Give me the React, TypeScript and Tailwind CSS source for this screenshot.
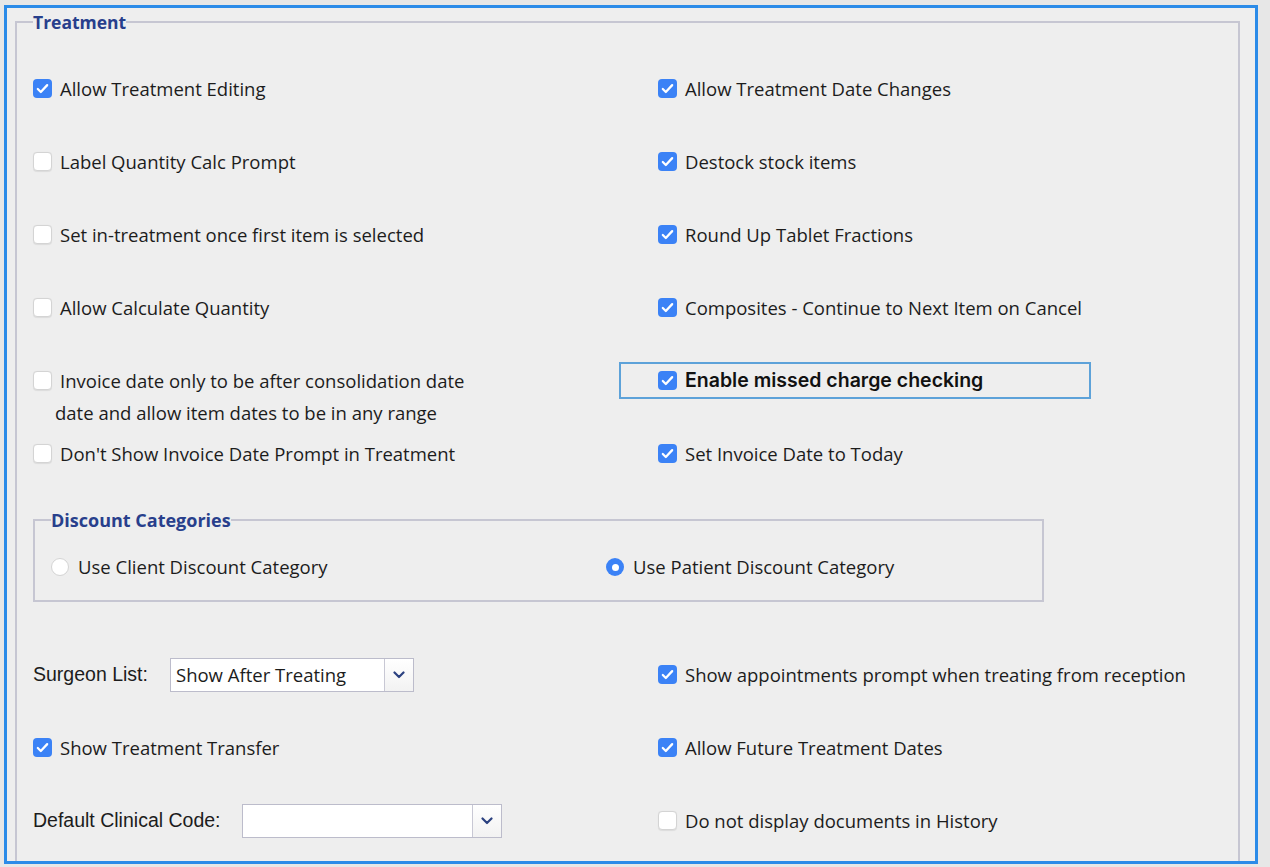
import { type ReactNode } from 'react'

const BODY = "font-['Open_Sans','Noto_Sans',sans-serif] text-[18.5px] text-[#1c1c1c]"

function Check({ checked }: { checked?: boolean }) {
  if (checked) {
    return (
      <span className="flex h-[19px] w-[19px] shrink-0 items-center justify-center rounded-[4px] bg-[#3b82f6]">
        <svg viewBox="0 0 16 16" className="h-[15px] w-[15px]" fill="none">
          <path d="M3 8.6l3.2 3.1L13 4.4" stroke="#fff" strokeWidth="2.4" strokeLinecap="round" strokeLinejoin="round" />
        </svg>
      </span>
    )
  }
  return (
    <span className="h-[19px] w-[19px] shrink-0 rounded-[4px] border border-[#d4d4d4] bg-white shadow-[0_0.5px_1px_rgba(0,0,0,0.08)]" />
  )
}

function Radio({ checked }: { checked?: boolean }) {
  if (checked) {
    return (
      <span className="flex h-[18px] w-[18px] shrink-0 items-center justify-center rounded-full bg-[#3b82f6]">
        <span className="h-[7px] w-[7px] rounded-full bg-white" />
      </span>
    )
  }
  return <span className="h-[18px] w-[18px] shrink-0 rounded-full border border-[#d4d4d4] bg-white" />
}

function CheckRow({ label, checked }: { label: string; checked?: boolean }) {
  return (
    <div className="flex items-center gap-[8px] leading-6">
      <Check checked={checked} />
      <span className="whitespace-nowrap">{label}</span>
    </div>
  )
}

function Select({ value, width }: { value?: string; width: string }) {
  return (
    <div className={`flex h-[34px] ${width} border border-[#bcbccb] bg-white`}>
      <div className="flex flex-1 items-center px-[5px] leading-6">{value}</div>
      <div className="flex w-[29px] items-center justify-center border-l border-[#c8c8d4] bg-gradient-to-b from-white to-[#f2f2f2]">
        <svg viewBox="0 0 12 8" className="h-[8px] w-[12px]" fill="none">
          <path d="M1.5 1.5L6 6l4.5-4.5" stroke="#2b4180" strokeWidth="2.2" strokeLinecap="round" strokeLinejoin="round" />
        </svg>
      </div>
    </div>
  )
}

function Row({ left, right, rightBox }: { left: ReactNode; right: ReactNode; rightBox?: boolean }) {
  return (
    <div className="grid h-[73px] grid-cols-[586px_1fr] items-center">
      <div>{left}</div>
      {rightBox ? (
        <div className="flex h-[37px] w-[472px] items-center border-2 border-[#5da2d9] pl-[37px]">{right}</div>
      ) : (
        <div className="pl-[39px]">{right}</div>
      )}
    </div>
  )
}

export default function App() {
  return (
    <div className={`h-[867px] w-full overflow-hidden bg-[#e7e7e7] pl-[4px] pt-[5px] ${BODY}`}>
      <div className="h-[859px] w-[1254px] overflow-hidden border-[3px] border-[#2b8be8] bg-[#eeeeee] pl-[8px] pt-[4px]">
        <fieldset className="h-[900px] w-[1225px] border-2 border-[#c6c6d2] px-[16px]">
          <legend className="text-[17.5px] font-bold leading-5 text-[#283f8c]">Treatment</legend>
          <div className="pt-[20px]">
            <Row left={<CheckRow label="Allow Treatment Editing" checked />} right={<CheckRow label="Allow Treatment Date Changes" checked />} />
            <Row left={<CheckRow label="Label Quantity Calc Prompt" />} right={<CheckRow label="Destock stock items" checked />} />
            <Row left={<CheckRow label="Set in-treatment once first item is selected" />} right={<CheckRow label="Round Up Tablet Fractions" checked />} />
            <Row left={<CheckRow label="Allow Calculate Quantity" />} right={<CheckRow label="Composites - Continue to Next Item on Cancel" checked />} />
            <Row
              left={
                <div className="relative">
                  <CheckRow label="Invoice date only to be after consolidation date" />
                  <div className="absolute left-[22px] top-[32px] whitespace-nowrap leading-6">date and allow item dates to be in any range</div>
                </div>
              }
              rightBox
              right={
                <div className="flex items-center gap-[8px]">
                  <Check checked />
                  <span className="whitespace-nowrap font-['Inter',sans-serif] text-[19.5px] font-semibold text-[#111]">Enable missed charge checking</span>
                </div>
              }
            />
            <Row left={<CheckRow label="Don't Show Invoice Date Prompt in Treatment" />} right={<CheckRow label="Set Invoice Date to Today" checked />} />

            <fieldset className="mt-[20px] h-[92px] w-[1011px] border-2 border-[#c6c6d2] px-[16px]">
              <legend className="text-[18px] font-bold leading-5 text-[#283f8c]">Discount Categories</legend>
              <div className="grid grid-cols-[555px_1fr] pt-[25px]">
                <div className="flex items-center gap-[9px] leading-6">
                  <Radio />
                  <span>Use Client Discount Category</span>
                </div>
                <div className="flex items-center gap-[9px] leading-6">
                  <Radio checked />
                  <span>Use Patient Discount Category</span>
                </div>
              </div>
            </fieldset>

            <div className="mt-[36px]">
              <Row
                left={
                  <div className="flex items-center">
                    <span className="w-[137px] font-['Liberation_Sans',Arial,sans-serif] text-[19.5px]">Surgeon List:</span>
                    <Select value="Show After Treating" width="w-[244px]" />
                  </div>
                }
                right={<CheckRow label="Show appointments prompt when treating from reception" checked />}
              />
              <Row left={<CheckRow label="Show Treatment Transfer" checked />} right={<CheckRow label="Allow Future Treatment Dates" checked />} />
              <Row
                left={
                  <div className="flex items-center">
                    <span className="w-[209px] font-['Liberation_Sans',Arial,sans-serif] text-[19.5px]">Default Clinical Code:</span>
                    <Select width="w-[260px]" />
                  </div>
                }
                right={<CheckRow label="Do not display documents in History" />}
              />
            </div>
          </div>
        </fieldset>
      </div>
    </div>
  )
}
